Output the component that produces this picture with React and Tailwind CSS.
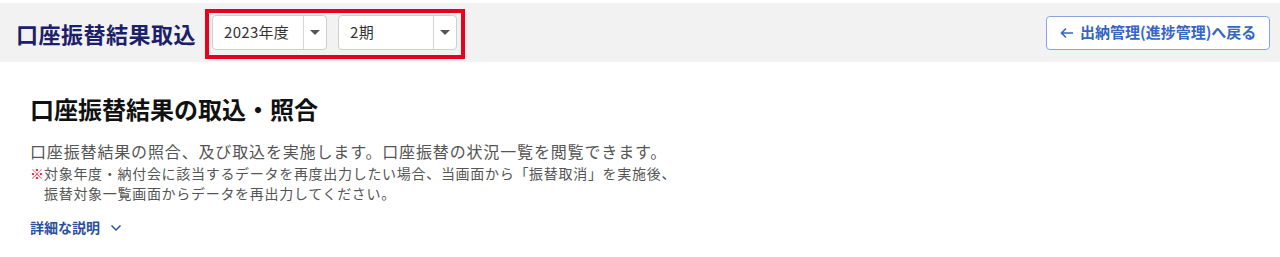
import React from "react";

const font = { fontFamily: '"Noto Sans CJK JP", "Noto Sans", sans-serif' };

function Caret() {
  return (
    <svg width="10" height="6" viewBox="0 0 10 6" className="block">
      <path d="M0 0 L10 0 L5 5 Z" fill="#555" />
    </svg>
  );
}

function SelectBox({ label, width, textWidth }) {
  return (
    <div
      className="flex h-[35px] items-stretch rounded-[4px] border border-[#cfcfcf] bg-white"
      style={{ width }}
    >
      <div className="flex items-center pl-[11px] text-[15px] tracking-[0.3px] text-[#333]" style={{ width: textWidth }}>
        {label}
      </div>
      <div className="flex flex-1 items-center justify-center border-l border-[#d6d6d6]">
        <Caret />
      </div>
    </div>
  );
}

export default function App() {
  return (
    <div className="w-[1280px] h-[257px] bg-white pt-[3px]" style={font}>
      <header className="flex h-[59px] items-center justify-between bg-[#f2f2f2] pl-[16px] pr-[10px]">
        <div className="flex items-center">
          <h1 className="text-[22px] font-bold leading-none tracking-[0.5px] text-[#1c2068]">口座振替結果取込</h1>
          <div className="ml-[9px] mt-[3px] flex h-[50px] items-start gap-[11px] border-[4px] border-[#e8001c] pl-[3px] pr-[4px] pt-[2px]">
            <SelectBox label="2023年度" width={115} textWidth={90} />
            <SelectBox label="2期" width={119} textWidth={94} />
          </div>
        </div>
        <button className="flex h-[34px] w-[224px] items-center rounded-[4px] border border-[#86a5e0] bg-white pl-[13px] text-[15px] font-bold text-[#3466c2]">
          <svg width="14" height="12" viewBox="0 0 14 12" className="mr-[6px]">
            <path d="M13 6 H2 M6 1.5 L1.5 6 L6 10.5" stroke="#3466c2" strokeWidth="1.6" fill="none" />
          </svg>
          出納管理(進捗管理)へ戻る
        </button>
      </header>
      <main className="pl-[30px] pt-[33px]">
        <h2 className="text-[24px] font-bold leading-[28px] text-[#111]">口座振替結果の取込・照合</h2>
        <p className="mt-[17px] text-[16px] leading-[22px] tracking-[0.85px] text-[#555]">
          口座振替結果の照合、及び取込を実施します。口座振替の状況一覧を閲覧できます。
        </p>
        <div className="mt-[1px] flex text-[14px] leading-[20px] tracking-[0.7px] text-[#555]">
          <span className="w-[14px] shrink-0 text-[#e8001c]">※</span>
          <span>
            対象年度・納付会に該当するデータを再度出力したい場合、当画面から「振替取消」を実施後、
            <br />
            振替対象一覧画面からデータを再出力してください。
          </span>
        </div>
        <div className="mt-[14px] flex items-center text-[14px] font-bold text-[#2c4f9e]">
          詳細な説明
          <svg width="12" height="8" viewBox="0 0 12 8" className="ml-[10px]">
            <path d="M1.5 1.5 L6 6 L10.5 1.5" stroke="#2c4f9e" strokeWidth="1.5" fill="none" />
          </svg>
        </div>
      </main>
    </div>
  );
}
